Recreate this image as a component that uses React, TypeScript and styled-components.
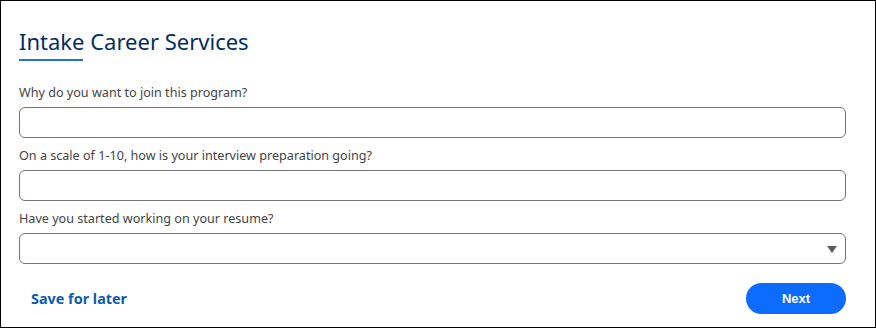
import styled, { createGlobalStyle } from "styled-components";

const GlobalStyle = createGlobalStyle`
  * {
    box-sizing: border-box;
  }
  body {
    margin: 0;
    background: #ffffff;
    font-family: "Noto Sans", "Open Sans", Arial, sans-serif;
  }
`;

const Card = styled.section`
  width: 876px;
  height: 328px;
  border: 1px solid #000000;
  background: #ffffff;
  padding: 25px 29px 0 18px;
  display: flex;
  flex-direction: column;
`;

const Title = styled.h1`
  margin: 0;
  font-size: 22px;
  font-weight: 400;
  line-height: 30px;
  color: #032d60;
`;

const TitleRule = styled.div`
  width: 64px;
  height: 2px;
  margin-top: 3px;
  background: #2574c3;
`;

const Fields = styled.div`
  margin-top: 22px;
  display: flex;
  flex-direction: column;
  gap: 8px;
`;

const Field = styled.label`
  display: flex;
  flex-direction: column;
  gap: 4px;
`;

const Label = styled.span`
  font-size: 12.6px;
  line-height: 20px;
  color: #444444;
`;

const TextInput = styled.input`
  width: 100%;
  height: 31px;
  border: 1px solid #747474;
  border-radius: 6px;
  padding: 0 12px;
  font: inherit;
  font-size: 13px;
  background: #ffffff;
  outline: none;
`;

const SelectBox = styled.div`
  position: relative;
  width: 100%;
  height: 31px;
  border: 1px solid #747474;
  border-radius: 6px;
  background: #ffffff;
`;

const Caret = styled.span`
  position: absolute;
  right: 8px;
  top: 12px;
  width: 0;
  height: 0;
  border-left: 5px solid transparent;
  border-right: 5px solid transparent;
  border-top: 7px solid #5c5c5c;
`;

const Footer = styled.div`
  margin-top: 19px;
  display: flex;
  align-items: center;
  justify-content: space-between;
`;

const LinkButton = styled.button`
  border: none;
  background: none;
  padding: 0 0 0 12px;
  font-family: inherit;
  font-size: 14.4px;
  font-weight: 700;
  color: #0b5cab;
  cursor: pointer;
`;

const PrimaryButton = styled.button`
  width: 100px;
  height: 31px;
  border: none;
  border-radius: 16px;
  background: #0b6cff;
  color: #ffffff;
  font-family: "Liberation Sans", Arial, sans-serif;
  font-size: 13px;
  font-weight: 700;
  cursor: pointer;
`;

const questions = [
  { label: "Why do you want to join this program?", kind: "text" },
  { label: "On a scale of 1-10, how is your interview preparation going?", kind: "text" },
  { label: "Have you started working on your resume?", kind: "select" },
];

const App = () => {
  return (
    <>
      <GlobalStyle />
      <Card>
        <Title>Intake Career Services</Title>
        <TitleRule />
        <Fields>
          {questions.map((q) => (
            <Field key={q.label}>
              <Label>{q.label}</Label>
              {q.kind === "select" ? (
                <SelectBox>
                  <Caret />
                </SelectBox>
              ) : (
                <TextInput type="text" />
              )}
            </Field>
          ))}
        </Fields>
        <Footer>
          <LinkButton>Save for later</LinkButton>
          <PrimaryButton>Next</PrimaryButton>
        </Footer>
      </Card>
    </>
  );
};

export default App;
